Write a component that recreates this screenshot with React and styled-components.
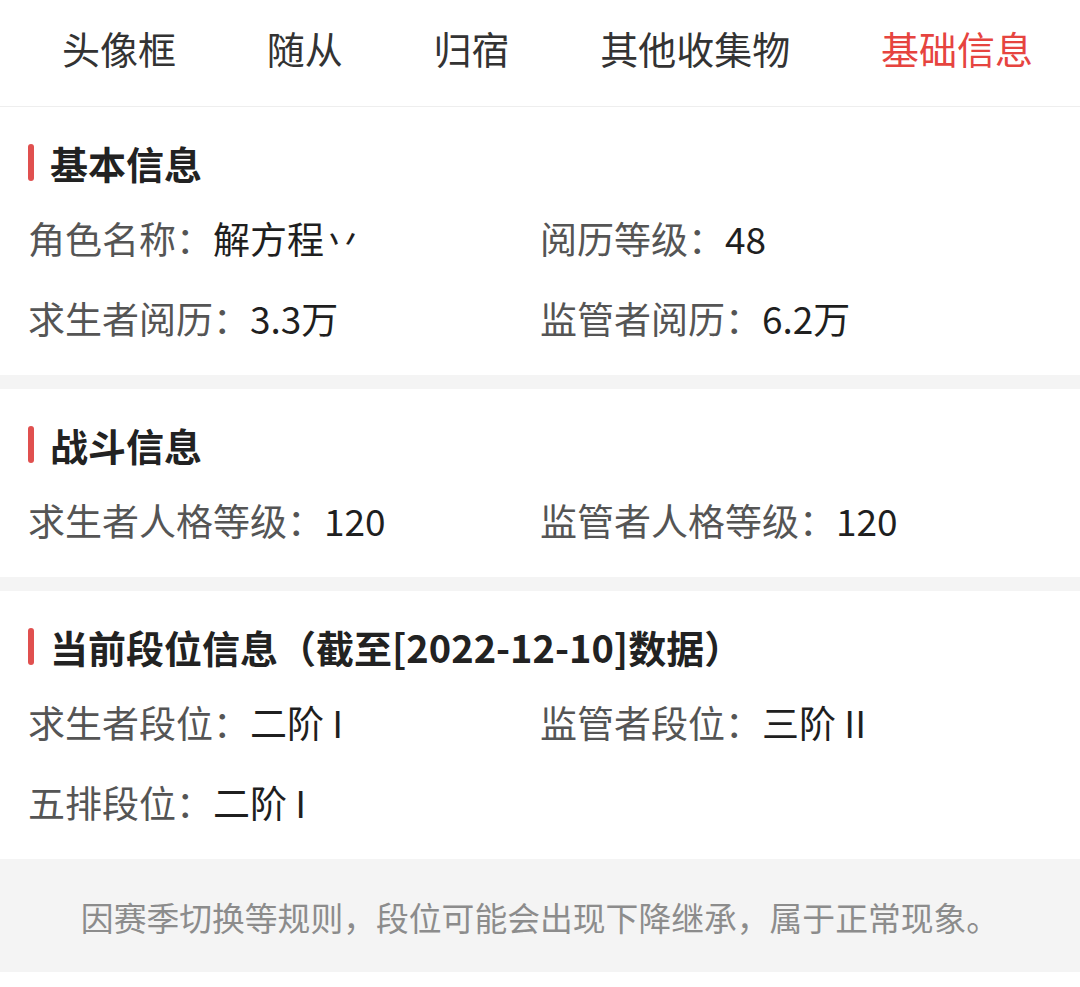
import styled, { createGlobalStyle } from "styled-components";

const GlobalStyle = createGlobalStyle`
	body {
		margin: 0;
		background: #ffffff;
		font-family: "Noto Sans CJK SC", "Noto Sans", sans-serif;
		text-spacing-trim: space-all;
	}
`;

const tabs = ["头像框", "随从", "归宿", "其他收集物", "基础信息"];

const sections = [
	{
		title: "基本信息",
		rows: [
			["角色名称：", "解方程丷"],
			["阅历等级：", "48"],
			["求生者阅历：", "3.3万"],
			["监管者阅历：", "6.2万"],
		],
	},
	{
		title: "战斗信息",
		rows: [
			["求生者人格等级：", "120"],
			["监管者人格等级：", "120"],
		],
	},
	{
		title: "当前段位信息（截至[2022-12-10]数据）",
		rows: [
			["求生者段位：", "二阶 I"],
			["监管者段位：", "三阶 II"],
			["五排段位：", "二阶 I"],
		],
	},
];

const App = () => {
	return (
		<Page>
			<GlobalStyle />
			<TabBar>
				{tabs.map((t) => (
					<Tab key={t} active={t === "基础信息"}>
						{t}
					</Tab>
				))}
			</TabBar>
			{sections.map((s) => (
				<Section key={s.title}>
					<Title>{s.title}</Title>
					<Grid>
						{s.rows.map(([label, value]) => (
							<Row key={label}>
								<Label>{label}</Label>
								<Value>{value}</Value>
							</Row>
						))}
					</Grid>
				</Section>
			))}
			<Footer>因赛季切换等规则，段位可能会出现下降继承，属于正常现象。</Footer>
		</Page>
	);
};

export default App;

const Page = styled.div`
	width: 1080px;
	min-height: 987px;
	background: #f4f4f4;
	padding-bottom: 15px;
	box-sizing: border-box;
	position: relative;
	&::after {
		content: "";
		position: absolute;
		left: 0;
		right: 0;
		bottom: 0;
		height: 15px;
		background: #ffffff;
	}
`;

const TabBar = styled.div`
	display: flex;
	justify-content: space-between;
	align-items: center;
	height: 106px;
	padding: 0 47px 0 62px;
	background: #ffffff;
	border-bottom: 1px solid #eeeeee;
`;

const Tab = styled.div`
	font-size: 38px;
	line-height: 1;
	margin-top: -10px;
	color: ${(p) => (p.active ? "#e6443f" : "#333333")};
`;

const Section = styled.div`
	background: #ffffff;
	padding: 27px 0 17px 28px;
	& + & {
		margin-top: 14px;
	}
`;

const Title = styled.div`
	display: flex;
	align-items: center;
	height: 56px;
	font-size: 38px;
	font-weight: bold;
	color: #222222;
	margin-bottom: 8px;
	&::before {
		content: "";
		width: 6px;
		height: 37px;
		border-radius: 3px;
		background: #e0504f;
		margin-right: 16px;
	}
`;

const Grid = styled.div`
	display: grid;
	grid-template-columns: 512px 1fr;
`;

const Row = styled.div`
	display: flex;
	align-items: center;
	height: 80px;
	font-size: 37px;
`;

const Label = styled.span`
	color: #555555;
`;

const Value = styled.span`
	color: #1f1f1f;
`;

const Footer = styled.div`
	height: 112px;
	display: flex;
	align-items: center;
	justify-content: center;
	font-size: 32.8px;
	color: #8c8c8c;
	background: #f4f4f4;
	margin-top: 1px;
`;
